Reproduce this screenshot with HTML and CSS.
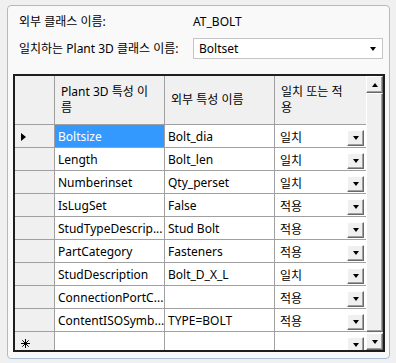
FILE: index.html
```html
<!DOCTYPE html>
<html lang="ko">
<head>
    <meta charset="UTF-8">
    <title>클래스 매핑</title>
    <link rel="stylesheet" href="styles.css">
</head>
<body>
    <div class="group">
        <div class="field">
            <span class="label">외부 클래스 이름:</span>
            <span class="value">AT_BOLT</span>
        </div>
        <div class="field">
            <span class="label">일치하는 Plant 3D 클래스 이름:</span>
            <div class="combo">
                <span>Boltset</span>
                <span class="combo-arrow"></span>
            </div>
        </div>

        <div class="grid">
            <div class="cells">
                <div class="hd corner"></div>
                <div class="hd">Plant 3D 특성 이<br>름</div>
                <div class="hd">외부 특성 이름</div>
                <div class="hd last">일치 또는 적<br>용</div>

                <div class="rh"><span class="current"></span></div>
                <div class="c selected">Boltsize</div>
                <div class="c">Bolt_dia</div>
                <div class="c pick">일치<span class="btn"></span></div>

                <div class="rh"></div>
                <div class="c">Length</div>
                <div class="c">Bolt_len</div>
                <div class="c pick">일치<span class="btn"></span></div>

                <div class="rh"></div>
                <div class="c">Numberinset</div>
                <div class="c">Qty_perset</div>
                <div class="c pick">일치<span class="btn"></span></div>

                <div class="rh"></div>
                <div class="c">IsLugSet</div>
                <div class="c">False</div>
                <div class="c pick">적용<span class="btn"></span></div>

                <div class="rh"></div>
                <div class="c">StudTypeDescrip...</div>
                <div class="c">Stud Bolt</div>
                <div class="c pick">적용<span class="btn"></span></div>

                <div class="rh"></div>
                <div class="c">PartCategory</div>
                <div class="c">Fasteners</div>
                <div class="c pick">적용<span class="btn"></span></div>

                <div class="rh"></div>
                <div class="c">StudDescription</div>
                <div class="c">Bolt_D_X_L</div>
                <div class="c pick">일치<span class="btn"></span></div>

                <div class="rh"></div>
                <div class="c">ConnectionPortC...</div>
                <div class="c"></div>
                <div class="c pick">적용<span class="btn"></span></div>

                <div class="rh"></div>
                <div class="c">ContentISOSymb...</div>
                <div class="c">TYPE=BOLT</div>
                <div class="c pick">적용<span class="btn"></span></div>

                <div class="rh">
                    <svg class="star" width="9" height="9" viewBox="0 0 9 9">
                        <path d="M4.5 0V9M0 4.5H9M1.3 1.3L7.7 7.7M7.7 1.3L1.3 7.7" stroke="#000" stroke-width="1"/>
                    </svg>
                </div>
                <div class="c"></div>
                <div class="c"></div>
                <div class="c pick"><span class="btn"></span></div>
            </div>

            <div class="scrollbar">
                <div class="sb-btn"><span class="up"></span></div>
                <div class="thumb"></div>
                <div class="track"></div>
                <div class="sb-btn"><span class="down"></span></div>
            </div>
        </div>
    </div>
</body>
</html>
```

FILE: styles.css
```css
body {
    margin: 0;
    background: #f0f0f0;
    font-family: "Noto Sans", "Noto Sans CJK KR", sans-serif;
    font-size: 12px;
    color: #000;
}
.group {
    margin: 5px 0 0 7px;
    width: 381px;
    height: 352px;
    border: 1px solid #a9bcd3;
    border-radius: 4px;
    background: #f9f9f9;
}
.field {
    display: flex;
    align-items: center;
    padding-left: 11px;
}
.field:first-child {
    height: 30px;
}
.field .label {
    width: 174px;
}
.combo {
    width: 190px;
    height: 21px;
    border: 1px solid #c5c5c5;
    background: #fff;
    display: flex;
    align-items: center;
    justify-content: space-between;
    padding: 0 6px 0 5px;
    box-sizing: border-box;
    margin-top: 2px;
}
.combo-arrow {
    border-left: 3.5px solid transparent;
    border-right: 3.5px solid transparent;
    border-top: 4px solid #000;
}
.grid {
    display: flex;
    margin: 15px 0 0 5px;
    width: 372px;
    height: 278px;
    border: 2px solid #1e1e1e;
    box-sizing: border-box;
    overflow: hidden;
}
.cells {
    display: grid;
    grid-template-columns: 40px 110px 110px 91px;
    grid-template-rows: 49px repeat(10, 23px);
    align-content: start;
}
.hd, .rh, .c {
    border-right: 1px solid #a0a0a0;
    border-bottom: 1px solid #a0a0a0;
    display: flex;
    align-items: center;
    white-space: nowrap;
    overflow: hidden;
}
.hd {
    background: #f0f0f0;
    padding-left: 6px;
    line-height: 16px;
    white-space: normal;
}
.hd.corner {
    padding: 0;
}
.last, .pick {
    border-right: none;
}
.rh {
    background: #f0f0f0;
    padding-left: 6px;
    padding-top: 1px;
}
.current {
    border-top: 4.5px solid transparent;
    border-bottom: 4.5px solid transparent;
    border-left: 5px solid #000;
}
.c {
    background: #fff;
    padding-left: 3px;
    padding-top: 1px;
}
.c.selected {
    background: #3399ff;
    color: #fff;
}
.pick {
    padding-left: 5px;
    justify-content: space-between;
    padding-right: 2px;
}
.pick .btn:only-child {
    margin-left: auto;
}
.btn {
    width: 17px;
    height: 16px;
    box-sizing: border-box;
    background: #f0f0f0;
    border: 1px solid;
    border-color: #fff #696969 #696969 #fff;
    box-shadow: inset -1px -1px #a0a0a0;
    display: flex;
    align-items: center;
    justify-content: center;
    margin-top: 2px;
}
.btn::after, .down {
    content: "";
    border-left: 3.5px solid transparent;
    border-right: 3.5px solid transparent;
    border-top: 4px solid #000;
}
.scrollbar {
    width: 17px;
    display: flex;
    flex-direction: column;
    background: #f0f0f0;
}
.sb-btn {
    height: 17px;
    box-sizing: border-box;
    background: #f0f0f0;
    border: 1px solid;
    border-color: #fff #696969 #696969 #fff;
    box-shadow: inset -1px -1px #a0a0a0;
    display: flex;
    align-items: center;
    justify-content: center;
}
.up {
    border-left: 3.5px solid transparent;
    border-right: 3.5px solid transparent;
    border-bottom: 4px solid #000;
}
.thumb {
    height: 239px;
    box-sizing: border-box;
    background: #f0f0f0;
    border: 1px solid;
    border-color: #fff #696969 #696969 #fff;
    box-shadow: inset -1px -1px #a0a0a0;
}
.track {
    flex: 1;
    background: repeating-linear-gradient(45deg, #f0f0f0 0 1px, #fff 1px 2px);
}
```
